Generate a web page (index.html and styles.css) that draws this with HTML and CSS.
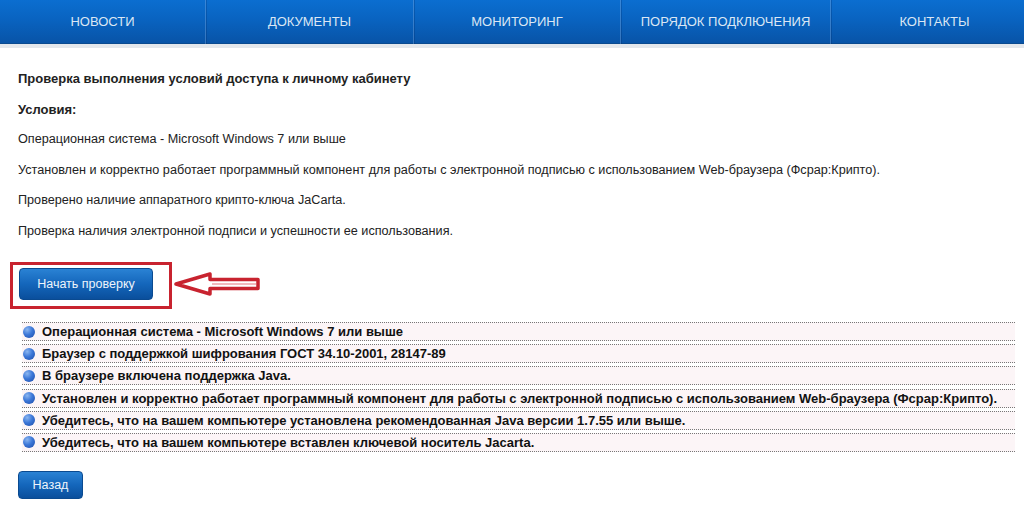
FILE: index.html
```html
<!DOCTYPE html>
<html lang="ru">
<head>
<meta charset="utf-8">
<title>Проверка условий доступа</title>
<link rel="stylesheet" href="styles.css">
</head>
<body>
<nav class="nav">
  <a class="nav-item">НОВОСТИ</a>
  <a class="nav-item">ДОКУМЕНТЫ</a>
  <a class="nav-item">МОНИТОРИНГ</a>
  <a class="nav-item">ПОРЯДОК ПОДКЛЮЧЕНИЯ</a>
  <a class="nav-item">КОНТАКТЫ</a>
</nav>
<main class="content">
  <p class="bold">Проверка выполнения условий доступа к личному кабинету</p>
  <p class="bold">Условия:</p>
  <p>Операционная система - Microsoft Windows 7 или выше</p>
  <p>Установлен и корректно работает программный компонент для работы с электронной подписью с использованием Web-браузера (Фсрар:Крипто).</p>
  <p>Проверено наличие аппаратного крипто-ключа JaCarta.</p>
  <p>Проверка наличия электронной подписи и успешности ее использования.</p>

  <div class="start-row">
    <div class="highlight">
      <button class="btn btn-start">Начать проверку</button>
    </div>
    <svg class="arrow" width="90" height="26" viewBox="0 0 90 26">
      <path d="M4 13 L38 3 L38 8.5 L86 8.5 L86 17.5 L38 17.5 L38 23 Z" fill="none" stroke="#c8232f" stroke-width="3.5" stroke-linejoin="round"/>
      <path d="M40 13 L84 13" stroke="#f2b8bd" stroke-width="2"/>
    </svg>
  </div>

  <div class="checks">
    <div class="check"><span class="dot"></span>Операционная система - Microsoft Windows 7 или выше</div>
    <div class="check"><span class="dot"></span>Браузер с поддержкой шифрования ГОСТ 34.10-2001, 28147-89</div>
    <div class="check"><span class="dot"></span>В браузере включена поддержка Java.</div>
    <div class="check"><span class="dot"></span>Установлен и корректно работает программный компонент для работы с электронной подписью с использованием Web-браузера (Фсрар:Крипто).</div>
    <div class="check"><span class="dot"></span>Убедитесь, что на вашем компьютере установлена рекомендованная Java версии 1.7.55 или выше.</div>
    <div class="check"><span class="dot"></span>Убедитесь, что на вашем компьютере вставлен ключевой носитель Jacarta.</div>
  </div>

  <button class="btn btn-back">Назад</button>
</main>
</body>
</html>
```

FILE: styles.css
```css
* { box-sizing: border-box; }
html, body { margin: 0; padding: 0; background: #fff; }
body {
  font-family: "Liberation Sans", Arial, sans-serif;
  color: #222;
  width: 1024px;
  height: 505px;
  overflow: hidden;
}
.nav {
  display: grid;
  grid-template-columns: 205px 208px 207px 210px 208px;
  width: 1038px;
  height: 48px;
  background: linear-gradient(#0b6ed0 0%, #0963c0 45%, #0853a6 100%);
  border-bottom: 4px solid #e3e7ec;
  box-shadow: inset 0 -1px 0 #0a4a8f;
}
.nav-item {
  display: flex;
  align-items: center;
  justify-content: center;
  color: #dbe7f4;
  font-size: 13px;
  padding-bottom: 1px;
  border-left: 1px solid rgba(140, 180, 230, 0.35);
  box-shadow: inset 1px 0 0 rgba(0, 40, 100, 0.25);
}
.nav-item:first-child { border-left: none; box-shadow: none; }
.content {
  padding: 9px 10px 0 18px;
}
.content p {
  margin: 13px 0;
  font-size: 12.65px;
  line-height: 17.5px;
  color: #222;
}
.content .bold { font-weight: bold; font-size: 13px; }
.start-row {
  display: flex;
  align-items: center;
  margin: 22px 0 0 -8px;
}
.highlight {
  border: 3px solid #c8232f;
  padding: 3px 16px 6px 6px;
}
.arrow { display: block; margin-top: -3px; }
.btn {
  display: block;
  border: 1px solid #0a4a90;
  border-radius: 4px;
  background: linear-gradient(#2a82d4 0%, #1466bb 50%, #0a4f9c 100%);
  color: #eef4fb;
  font-family: "Liberation Sans", Arial, sans-serif;
  font-size: 12.5px;
  cursor: pointer;
}
.btn-start { width: 134px; height: 32px; }
.btn-back { width: 65px; height: 28px; margin-top: 19px; padding: 0; }
.checks {
  display: flex;
  flex-direction: column;
  gap: 3.2px;
  margin: 13px 0 0 4px;
  width: 993px;
}
.check {
  display: flex;
  align-items: center;
  height: 19px;
  background: #fcf5f7;
  border-top: 1px dotted #777;
  border-bottom: 1px dotted #777;
  font-size: 13px;
  font-weight: bold;
  color: #111;
  white-space: nowrap;
}
.dot {
  width: 12px;
  height: 12px;
  border-radius: 50%;
  margin: 0 7px 0 1px;
  flex: none;
  background: radial-gradient(circle at 35% 30%, #8bb6f0 0%, #3c78d8 45%, #1c4aa6 100%);
}
```
